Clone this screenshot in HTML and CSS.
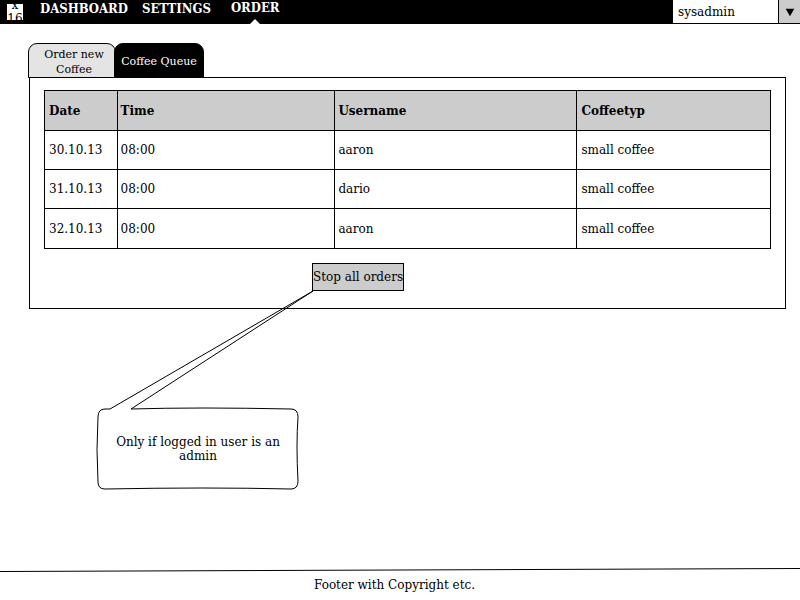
FILE: index.html
```html
<!DOCTYPE html>
<html lang="en">
<head>
<meta charset="utf-8">
<title>Coffee Queue</title>
<link rel="stylesheet" href="styles.css">
</head>
<body>
<header class="topbar">
  <div class="logo">x<br>16</div>
  <nav class="nav">
    <a href="#">DASHBOARD</a>
    <a href="#">SETTINGS</a>
    <a href="#" class="current" aria-current="page">ORDER</a>
  </nav>
  <div class="user">
    <select aria-label="User"><option>sysadmin</option></select>
    <svg class="arrow" viewBox="0 0 22 24" aria-hidden="true"><path d="M7 9h9l-4.500 8z"/></svg>
  </div>
</header>
<main class="content">
  <div class="tabs">
    <button type="button" class="tab">Order new Coffee</button>
    <button type="button" class="tab active">Coffee Queue</button>
  </div>
  <section class="panel">
    <table class="queue">
      <colgroup><col class="c-date"><col class="c-time"><col class="c-user"><col class="c-type"></colgroup>
      <thead><tr><th>Date</th><th>Time</th><th>Username</th><th>Coffeetyp</th></tr></thead>
      <tbody>
        <tr><td>30.10.13</td><td>08:00</td><td>aaron</td><td>small coffee</td></tr>
        <tr><td>31.10.13</td><td>08:00</td><td>dario</td><td>small coffee</td></tr>
        <tr><td>32.10.13</td><td>08:00</td><td>aaron</td><td>small coffee</td></tr>
      </tbody>
    </table>
    <div class="stop">
      <button type="button" class="stop-button">Stop all orders</button>
      <div class="callout">
        <svg viewBox="0 0 217 200" aria-hidden="true"><path d="M13 119 216 1 34 119Q100 117 194 119Q201 119 201 127Q199 155 201 191Q201 199 194 199Q110 197 8 199Q1 199 1 192Q-1 160 1 127Q1 119 8 119Z"/></svg>
        <p>Only if logged in user is an admin</p>
      </div>
    </div>
  </section>
</main>
<footer class="footer">
  <svg viewBox="0 0 800 4" preserveAspectRatio="none" aria-hidden="true"><path d="M0 3.500 800 .5"/></svg>
  <p>Footer with Copyright etc.</p>
</footer>
</body>
</html>
```
FILE: styles.css
```css
* { box-sizing: border-box; }
body {
  margin: 0;
  min-height: 100vh;
  display: flex;
  flex-direction: column;
  background: #fff;
  color: #000;
  font: 12px/14px "DejaVu Serif", serif;
}
button, select { font: inherit; color: inherit; }
p { margin: 0; }
.topbar {
  display: flex;
  height: 24px;
  background: #000;
}
.logo {
  display: flex;
  flex-direction: column;
  justify-content: center;
  width: 16px;
  height: 16px;
  margin: 4px 17px 0 7px;
  overflow: hidden;
  background: #fff;
  text-align: center;
}
.nav {
  display: flex;
  gap: 14px;
  font: bold 13px/14px "DejaVu Serif Condensed", "DejaVu Serif", serif;
}
.nav a { padding-top: 2px; color: #fff; text-decoration: none; }
.nav .current { position: relative; margin-left: 6px; padding-top: 1px; }
.nav .current::after {
  content: "";
  position: absolute;
  left: 50%;
  bottom: 0;
  margin-left: -5px;
  border: 5px solid transparent;
  border-top: 0;
  border-bottom-color: #fff;
}
.user { position: relative; width: 127px; margin-left: auto; }
.user select {
  appearance: none;
  width: 100%;
  height: 24px;
  padding: 0 26px 0 5px;
  border: 0;
  border-bottom: 1px solid #000;
  border-radius: 0;
  background: #fff;
}
.arrow {
  position: absolute;
  top: 0;
  right: 0;
  width: 22px;
  height: 24px;
  border-left: 1px solid #000;
  border-bottom: 1px solid #000;
  background: #ccc;
  pointer-events: none;
}
.content { flex: 1; padding: 19px 14px 0 29px; }
.tabs { display: flex; margin-left: -1px; }
.tab {
  width: 88px;
  height: 35px;
  padding: 2px 8px 0 12px;
  border: 1px solid #000;
  border-radius: 9px 9px 0 0;
  background: #e4e4e4;
  font-size: 11px;
  line-height: 15px;
}
.tab.active {
  width: 90px;
  margin-left: -2px;
  padding: 2px 0 0;
  background: #000;
  color: #fff;
}
.panel {
  margin-top: -1px;
  padding: 12px 14px 17px;
  border: 1px solid #000;
}
.queue {
  width: 100%;
  table-layout: fixed;
  border-collapse: collapse;
}
.c-date { width: 10%; }
.c-time { width: 30%; }
.c-user { width: 242px; }
.queue th, .queue td {
  height: 39px;
  padding: 0 4px;
  border: 1px solid #000;
  text-align: left;
}
.queue th, .queue tr:last-child td { height: 40px; }
.queue th { background: #ccc; }
.queue tr > :nth-child(2), .queue tr > :nth-child(3) { padding-left: 3px; }
.stop { position: relative; width: 92px; margin: 14px 0 0 268px; }
.stop-button {
  display: block;
  width: 92px;
  height: 28px;
  padding: 0;
  border: 1px solid #000;
  background: #ccc;
  white-space: nowrap;
}
.callout {
  position: absolute;
  top: 27px;
  right: 90px;
  width: 217px;
  height: 200px;
}
.callout svg { display: block; fill: none; stroke: #000; overflow: visible; }
.callout p {
  position: absolute;
  left: 11px;
  top: 145px;
  width: 180px;
  text-align: center;
}
.footer { padding-bottom: 8px; text-align: center; }
.footer svg { display: block; width: 100%; height: 4px; margin-bottom: 6px; stroke: #000; }
.footer p { padding-right: 11px; }
```
